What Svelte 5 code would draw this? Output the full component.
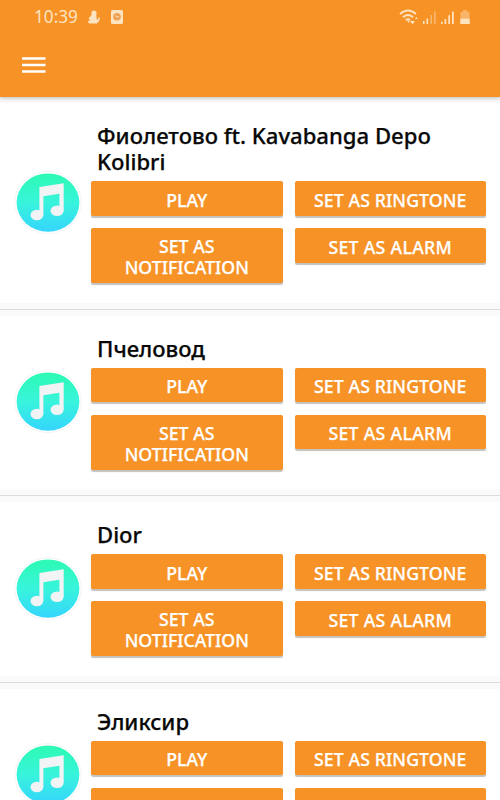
<script>
    let songs = [
        'Фиолетово ft. Kavabanga Depo Kolibri',
        'Пчеловод',
        'Dior',
        'Эликсир'
    ]
</script>

<main>
    <header>
        <div class="status">
            <span class="time">10:39</span>
            <svg class="figure" width="14" height="14" viewBox="0 0 14 14">
                <circle cx="7" cy="3" r="2.6" />
                <path d="M4.8 4.5h4.4l.5 4.2.3 1.3 1.6-1.6L11.4 7l1.6.8-.6 3-2.6 2.6H2.2L.6 11.4 3 10.2 1.6 8.4z" />
            </svg>
            <svg class="app" width="12" height="14" viewBox="0 0 12 14">
                <rect width="12" height="14" rx="1.5" />
                <circle class="ring" cx="6" cy="6.8" r="3.8" />
                <path class="hand" d="M4 5.5l2 1.6 2-.6" />
            </svg>
            <svg class="signals" width="74" height="16" viewBox="0 0 74 16">
                <g class="wifi">
                    <path d="M1 5Q9-2 17 5" />
                    <path d="M4 8.2Q9 3.8 14 8.2" />
                    <path d="M6.7 11Q9 9.2 11 11" />
                </g>
                <path d="M8 11.5h3L9.5 14zM11 12h5l-2.5 3.2zM16 10l1.4-2 1.4 2z" />
                <path d="M24 12h1.6v3H24zM27.5 9.5h1.6V15h-1.6z" />
                <path class="faint" d="M31.3 6h1.7v9h-1.7zM35 2.5h1.7V15H35z" />
                <path d="M42 12.8h1.6V15H42zM45.5 10h1.7v5h-1.7zM49.3 6.2H51V15h-1.7zM53 2.5h1.8V15H53z" />
                <path class="faint" d="M64 1h4v2h2.5v7h-9V3H64z" />
                <path d="M61.2 9.8h9.6V15h-9.6z" />
            </svg>
        </div>
        <svg class="menu" width="24" height="16" viewBox="0 0 24 16">
            <path d="M0 1.4h23.5M0 8h23.5M0 14.4h23.5" />
        </svg>
    </header>

    {#each songs as song}
        <div class="song">
            <svg class="cover" width="68" height="64" viewBox="0 0 68 64">
                <defs>
                    <linearGradient id="aqua" x1="0" y1="0" x2="0" y2="1">
                        <stop offset="0" stop-color="#2dfab2" />
                        <stop offset=".5" stop-color="#38f4dc" />
                        <stop offset="1" stop-color="#35d5fd" />
                    </linearGradient>
                </defs>
                <ellipse class="edge" cx="34" cy="31.6" rx="33.3" ry="31" />
                <ellipse cx="34" cy="31.6" rx="31.4" ry="29.2" fill="url(#aqua)" />
                <g class="note">
                    <path d="M25.4 15.9L49.7 12.2V39H45.4V22.8L29.4 25.2V44H25.4z" />
                    <ellipse cx="22.9" cy="44" rx="6.4" ry="5.2" />
                    <ellipse cx="43.1" cy="39.8" rx="6.6" ry="5.2" />
                </g>
            </svg>
            <div class="info">
                <h2>{song}</h2>
                <div class="buttons">
                    <button>PLAY</button>
                    <button>SET AS RINGTONE</button>
                    <button>SET AS NOTIFICATION</button>
                    <button>SET AS ALARM</button>
                </div>
            </div>
        </div>
    {/each}
</main>

<style>
    :global(body) {
        background: #fff;
    }
    main {
        width: 500px;
        height: 800px;
        overflow: hidden;
        font-family: "Noto Sans", "Open Sans", sans-serif;
    }
    header {
        position: relative;
        box-sizing: border-box;
        height: 97px;
        padding: 9px 0 0 22px;
        background: #f69226;
        box-shadow: 0 1px 4px rgba(0, 0, 0, 0.25);
    }
    .status {
        display: flex;
        align-items: center;
        height: 16px;
        padding-left: 12px;
        fill: #fde3c0;
    }
    .time {
        width: 53px;
        color: #fde3c0;
        font-size: 17.2px;
        line-height: 16px;
    }
    .app {
        margin-left: 10px;
    }
    .ring {
        fill: #ee9f50;
    }
    .hand {
        fill: none;
        stroke: #fde3c0;
    }
    .signals {
        margin-left: auto;
        margin-right: 27px;
    }
    .wifi {
        fill: none;
        stroke: #fde3c0;
        stroke-width: 1.8;
    }
    .faint {
        opacity: 0.45;
    }
    .menu {
        display: block;
        margin-top: 32px;
        fill: none;
        stroke: #fff;
        stroke-width: 2.5;
    }
    .song {
        display: flex;
        align-items: center;
        box-sizing: border-box;
        padding: 25.4px 14px 25.4px;
        border-bottom: 1.4px solid #dcdcdc;
        background: linear-gradient(#fafafa 6px, #fff 6px, #fff calc(100% - 6px), #fafafa calc(100% - 6px));
    }
    .cover {
        flex: none;
    }
    .edge {
        fill: #fff;
        stroke: #f3eff3;
        stroke-width: 0.8;
    }
    .note {
        fill: #f1f3f4;
    }
    .info {
        flex: 1;
        margin-left: 9px;
    }
    h2 {
        margin: 0 0 6.8px 6px;
        font-size: 22.1px;
        font-weight: 500;
        line-height: 26px;
        color: #080808;
        -webkit-text-stroke: 0.25px #080808;
    }
    .buttons {
        display: grid;
        grid-template-columns: 1fr 1fr;
        align-items: start;
        gap: 12.6px 12px;
    }
    button {
        min-height: 34.4px;
        padding: 8.2px 30px 4.8px;
        border: none;
        border-radius: 2px;
        background: #f69226;
        box-shadow: 0 1.6px 1px #c5c1bd;
        color: #fff;
        font-family: inherit;
        font-size: 17.7px;
        font-weight: 500;
        line-height: 21px;
        -webkit-text-stroke: 0.25px #fff;
    }
    button:nth-child(even) {
        padding-left: 0;
        padding-right: 0;
        letter-spacing: 0.1px;
    }
    button:last-child {
        letter-spacing: 0.3px;
    }
</style>
